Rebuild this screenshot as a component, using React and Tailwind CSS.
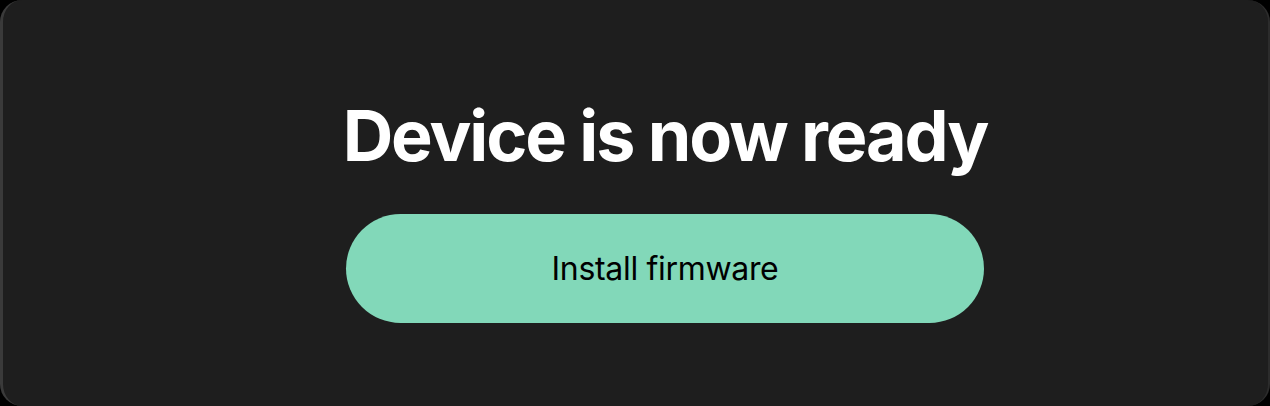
import React from 'react';

const App = () => {
  return (
    <div className="w-[1270px] h-[406px] bg-black">
      <div className="h-full w-full rounded-[22px] bg-[#1e1e1e] border-l-[3px] border-r-2 border-l-[#3a3a3a] border-r-[#2c2c2c] flex flex-col items-center pl-[59px] pt-[96px]">
        <h1 className="font-['Inter',sans-serif] font-bold text-[70px] leading-[80px] tracking-[-0.03em] text-white">
          Device is now ready
        </h1>
        <button className="mt-[38px] w-[638px] h-[109px] rounded-full bg-[#82d8b9] text-black font-['Inter',sans-serif] text-[32px] tracking-[-0.01em]">
          Install firmware
        </button>
      </div>
    </div>
  );
};

export default App;
